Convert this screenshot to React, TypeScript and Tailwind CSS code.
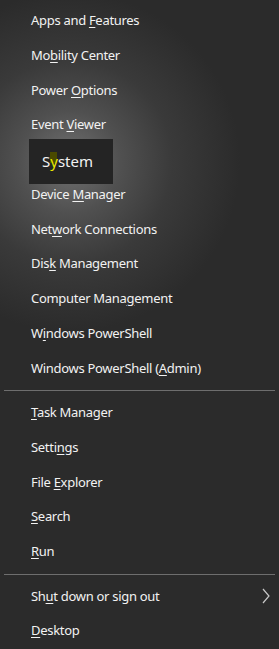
import React from "react";

type Item = { pre: string; key: string; post: string; chevron?: boolean };

const group1: Item[] = [
  { pre: "Apps and ", key: "F", post: "eatures" },
  { pre: "Mo", key: "b", post: "ility Center" },
  { pre: "Power ", key: "O", post: "ptions" },
  { pre: "Event ", key: "V", post: "iewer" },
  { pre: "S", key: "y", post: "stem" },
  { pre: "Device ", key: "M", post: "anager" },
  { pre: "Net", key: "w", post: "ork Connections" },
  { pre: "Dis", key: "k", post: " Management" },
  { pre: "Computer Mana", key: "g", post: "ement" },
  { pre: "W", key: "i", post: "ndows PowerShell" },
  { pre: "Windows PowerShell (", key: "A", post: "dmin)" },
];
const group2: Item[] = [
  { pre: "", key: "T", post: "ask Manager" },
  { pre: "Setti", key: "n", post: "gs" },
  { pre: "File ", key: "E", post: "xplorer" },
  { pre: "", key: "S", post: "earch" },
  { pre: "", key: "R", post: "un" },
];
const group3: Item[] = [
  { pre: "Sh", key: "u", post: "t down or sign out", chevron: true },
  { pre: "", key: "D", post: "esktop" },
];

function Row({ item }: { item: Item }) {
  const isSystem = item.pre === "S" && item.key === "y";
  return (
    <div className="relative flex h-[34.75px] items-center pl-[31px] pr-[9px]">
      {isSystem ? (
        <div className="absolute left-[29px] top-[-3.6px] flex h-[45px] w-[84px] items-center bg-[#242424] pl-[13px] text-[15px] text-[#f2f2f2]">
          <span>S</span>
          <span className="relative text-[#e8e800]">
            <span className="absolute left-[0px] top-[2px] h-[11px] w-[7px] bg-[#4a4a00]" />
            <span className="relative">y</span>
          </span>
          <span>stem</span>
        </div>
      ) : (
        <>
          <span className="flex-1 whitespace-pre text-[13px] tracking-[-0.3px] text-[#f2f2f2]">
            {item.pre}
            <u className="underline-offset-[2px]">{item.key}</u>
            {item.post}
          </span>
          {item.chevron && (
            <svg width="8" height="16" viewBox="0 0 8 16" className="text-[#c8c8c8]">
              <polyline
                points="1,1 7,8 1,15"
                fill="none"
                stroke="currentColor"
                strokeWidth="1.2"
              />
            </svg>
          )}
        </>
      )}
    </div>
  );
}

function Separator() {
  return (
    <div className="flex h-[9.75px] items-center px-[4px]">
      <div className="h-px w-full bg-[#6e6e6e]" />
    </div>
  );
}

export default function App() {
  return (
    <div
      className="flex h-[649px] w-[279px] flex-col overflow-hidden pt-[3.4px]"
      style={{
        fontFamily: '"Noto Sans", "Open Sans", sans-serif',
        background:
          "radial-gradient(circle 170px at 70px 162px, #727272 0%, #505050 30%, #3a3a3a 60%, #2b2b2b 100%), #2b2b2b",
      }}
    >
      {group1.map((it, i) => (
        <Row key={"a" + i} item={it} />
      ))}
      <Separator />
      {group2.map((it, i) => (
        <Row key={"b" + i} item={it} />
      ))}
      <Separator />
      {group3.map((it, i) => (
        <Row key={"c" + i} item={it} />
      ))}
    </div>
  );
}
